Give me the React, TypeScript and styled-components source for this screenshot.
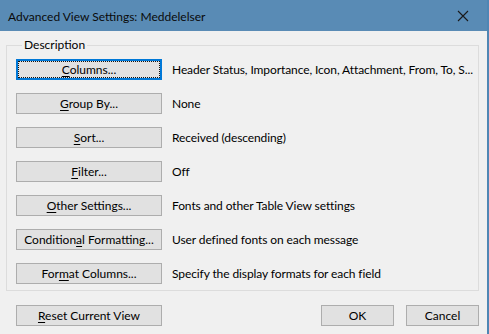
import styled, { createGlobalStyle } from "styled-components";

const Global = createGlobalStyle`
  html, body {
    margin: 0;
    padding: 0;
    background: #f0f0f0;
  }
  body {
    font-family: Lato, "Noto Sans", sans-serif;
    font-size: 12px;
    color: #000;
  }
`;

const rows = [
  { label: "Columns...", key: 0, text: "Header Status, Importance, Icon, Attachment, From, To, S...", focused: true },
  { label: "Group By...", key: 0, text: "None" },
  { label: "Sort...", key: 0, text: "Received (descending)" },
  { label: "Filter...", key: 0, text: "Off" },
  { label: "Other Settings...", key: 0, text: "Fonts and other Table View settings" },
  { label: "Conditional Formatting...", key: 9, text: "User defined fonts on each message" },
  { label: "Format Columns...", key: 3, text: "Specify the display formats for each field" },
];

// underline the access key letter
const Accel = ({ label, at }: { label: string; at: number }) => (
  <span>
    {label.slice(0, at)}
    <u>{label[at]}</u>
    {label.slice(at + 1)}
  </span>
);

const App = () => {
  return (
    <Window>
      <Global />
      <TitleBar>
        <Title>Advanced View Settings: Meddelelser</Title>
        <Close>
          <svg width="12" height="12" viewBox="0 0 12 12">
            <path d="M1 1 L11 11 M11 1 L1 11" stroke="#1a1a1a" strokeWidth="1.1" />
          </svg>
        </Close>
      </TitleBar>

      <Body>
        <Group>
          <Legend>Description</Legend>
          {rows.map((r) => (
            <Row key={r.label}>
              <Button $focused={r.focused}>
                <Accel label={r.label} at={r.key} />
              </Button>
              <Info>{r.text}</Info>
            </Row>
          ))}
        </Group>

        <Footer>
          <Button>
            <Accel label="Reset Current View" at={0} />
          </Button>
          <Spacer />
          <Button $small>OK</Button>
          <Button $small>Cancel</Button>
        </Footer>
      </Body>
    </Window>
  );
};

const Window = styled.div`
  width: 489px;
  height: 334px;
  box-sizing: border-box;
  border-right: 2px solid #4f86b4;
  display: flex;
  flex-direction: column;
  overflow: hidden;
`;

const TitleBar = styled.div`
  height: 31px;
  flex: none;
  background: #598bb5;
  display: flex;
  align-items: center;
  padding: 0 0 0 8px;
`;

const Title = styled.div`
  flex: 1;
  font-size: 12px;
  color: #0a0a0a;
  padding-top: 1px;
`;

const Close = styled.div`
  width: 46px;
  height: 31px;
  display: flex;
  align-items: center;
  justify-content: center;
  margin-right: 1px;
`;

const Body = styled.div`
  flex: 1;
  padding: 7px 8px 0 6px;
`;

const Group = styled.fieldset`
  margin: 0;
  padding: 7px 0 6px 9px;
  border: 1px solid #dcdcdc;
  min-width: 0;
  min-inline-size: 0;
  display: flex;
  flex-direction: column;
  gap: 13px;
`;

const Legend = styled.legend`
  padding: 0 2px;
  margin-left: 6px;
  line-height: 14px;
`;

const Row = styled.div`
  display: flex;
  align-items: center;
  min-width: 0;
`;

const Button = styled.div<{ $focused?: boolean; $small?: boolean }>`
  box-sizing: border-box;
  width: ${(p) => (p.$small ? "73px" : "146px")};
  height: 21px;
  flex: none;
  display: flex;
  align-items: center;
  justify-content: center;
  background: #e1e1e1;
  border: 1px solid ${(p) => (p.$focused ? "#0078d7" : "#adadad")};
  box-shadow: ${(p) => (p.$focused ? "inset 0 0 0 1px #0078d7" : "none")};
  outline: ${(p) => (p.$focused ? "1px dotted #111" : "none")};
  outline-offset: -3px;
  color: #000;
  white-space: pre;
  u {
    text-decoration-thickness: 1px;
    text-underline-offset: 2px;
  }
`;

const Info = styled.div`
  margin-left: 10px;
  white-space: nowrap;
  letter-spacing: -0.1px;
`;

const Footer = styled.div`
  display: flex;
  align-items: center;
  gap: 12px;
  padding: 14px 0 0 10px;
`;

const Spacer = styled.div`
  flex: 1;
`;

export default App;
